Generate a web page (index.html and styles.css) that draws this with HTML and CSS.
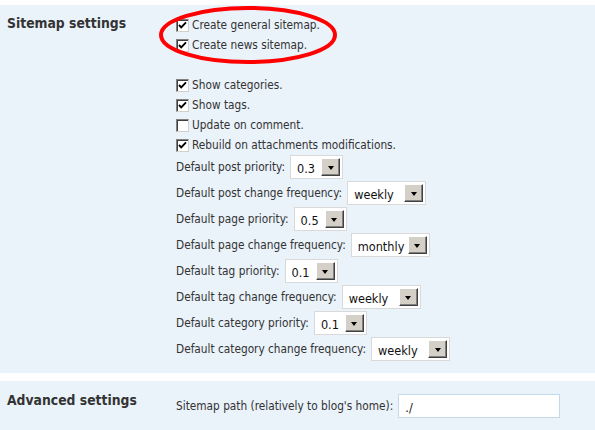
FILE: index.html
```html
<!DOCTYPE html>
<html>
<head>
<meta charset="utf-8">
<link rel="stylesheet" href="styles.css">
</head>
<body>
<div class="page">
  <section class="panel panel-main">
    <h3 class="heading">Sitemap settings</h3>
    <div class="content">
      <div class="checks">
        <label class="check"><span class="box on"><svg viewBox="0 0 11 11"><path d="M2 5 L4.2 7.3 L9 2.3" /></svg></span>Create general sitemap.</label>
        <label class="check"><span class="box on"><svg viewBox="0 0 11 11"><path d="M2 5 L4.2 7.3 L9 2.3" /></svg></span>Create news sitemap.</label>
        <div class="blank"></div>
        <label class="check"><span class="box on"><svg viewBox="0 0 11 11"><path d="M2 5 L4.2 7.3 L9 2.3" /></svg></span>Show categories.</label>
        <label class="check"><span class="box on"><svg viewBox="0 0 11 11"><path d="M2 5 L4.2 7.3 L9 2.3" /></svg></span>Show tags.</label>
        <label class="check"><span class="box"></span>Update on comment.</label>
        <label class="check"><span class="box on"><svg viewBox="0 0 11 11"><path d="M2 5 L4.2 7.3 L9 2.3" /></svg></span>Rebuild on attachments modifications.</label>
      </div>
      <div class="selects">
        <div class="srow"><span class="lbl">Default post priority:</span><span class="sel small"><span class="val">0.3</span><span class="btn"><i class="arrow"></i></span></span></div>
        <div class="srow"><span class="lbl">Default post change frequency:</span><span class="sel wide"><span class="val">weekly</span><span class="btn"><i class="arrow"></i></span></span></div>
        <div class="srow"><span class="lbl">Default page priority:</span><span class="sel small"><span class="val">0.5</span><span class="btn"><i class="arrow"></i></span></span></div>
        <div class="srow"><span class="lbl">Default page change frequency:</span><span class="sel wide"><span class="val">monthly</span><span class="btn"><i class="arrow"></i></span></span></div>
        <div class="srow"><span class="lbl">Default tag priority:</span><span class="sel small"><span class="val">0.1</span><span class="btn"><i class="arrow"></i></span></span></div>
        <div class="srow"><span class="lbl">Default tag change frequency:</span><span class="sel wide"><span class="val">weekly</span><span class="btn"><i class="arrow"></i></span></span></div>
        <div class="srow"><span class="lbl">Default category priority:</span><span class="sel small"><span class="val">0.1</span><span class="btn"><i class="arrow"></i></span></span></div>
        <div class="srow"><span class="lbl">Default category change frequency:</span><span class="sel wide"><span class="val">weekly</span><span class="btn"><i class="arrow"></i></span></span></div>
      </div>
    </div>
  </section>
  <section class="panel panel-adv">
    <h3 class="heading">Advanced settings</h3>
    <div class="content adv">
      <div class="srow"><span class="lbl">Sitemap path (relatively to blog's home):</span><span class="textbox">./</span></div>
    </div>
  </section>
  <svg class="circle" width="595" height="75" viewBox="0 0 595 75">
    <ellipse cx="248" cy="35" rx="87" ry="27" fill="none" stroke="#ff0000" stroke-width="4"/>
  </svg>
</div>
</body>
</html>
```
FILE: styles.css
```css
html, body {
  margin: 0;
  padding: 0;
  background: #ffffff;
}
body {
  font-family: "DejaVu Sans Condensed", "DejaVu Sans", sans-serif;
  font-size: 11.75px;
  color: #333333;
}
.page {
  position: relative;
  width: 595px;
  height: 430px;
  overflow: hidden;
  padding-top: 5px;
  box-sizing: border-box;
}
.panel {
  background: #eaf2fa;
  display: grid;
  grid-template-columns: 176px 1fr;
}
.panel-main {
  padding: 8px 0 11px 0;
}
.panel-adv {
  margin-top: 8px;
  padding: 9px 0 20px 0;
}
.heading {
  margin: 0;
  padding-left: 7px;
  font-size: 13.8px;
  font-weight: bold;
  line-height: 20px;
  color: #333333;
}
.content {
  padding-top: 2px;
}
.checks {
  display: flex;
  flex-direction: column;
}
.check {
  display: flex;
  align-items: center;
  height: 20px;
  white-space: nowrap;
}
.blank {
  height: 20px;
}
.box {
  width: 11px;
  height: 11px;
  background: #ffffff;
  border: 1px solid;
  border-color: #7f7f7f #d4d0c8 #d4d0c8 #7f7f7f;
  box-shadow: inset 1px 1px 0 #404040;
  margin-right: 3px;
  display: flex;
  flex: none;
}
.box svg {
  width: 11px;
  height: 11px;
}
.box svg path {
  fill: none;
  stroke: #000000;
  stroke-width: 1.9;
}
.selects {
  display: flex;
  flex-direction: column;
  margin-top: -1px;
}
.srow {
  display: flex;
  align-items: center;
  height: 26px;
  white-space: nowrap;
}
.lbl {
  margin-right: 5px;
}
.sel {
  box-sizing: border-box;
  height: 24px;
  background: #ffffff;
  border: 1px solid #d9d9d9;
  display: flex;
  align-items: center;
  justify-content: space-between;
  padding: 0 2px 0 6px;
  font-size: 12.6px;
  color: #111111;
}
.sel.small {
  width: 53px;
}
.sel.wide {
  width: 79px;
}
.val {
  padding-top: 3px;
}
.btn {
  box-sizing: border-box;
  width: 19px;
  height: 18px;
  background: #d4d0c8;
  border: 1px solid;
  border-color: #ffffff #404040 #404040 #ffffff;
  box-shadow: inset -1px -1px 0 #808080;
  display: flex;
  align-items: center;
  justify-content: center;
  flex: none;
}
.arrow {
  width: 0;
  height: 0;
  border-left: 3.5px solid transparent;
  border-right: 3.5px solid transparent;
  border-top: 4px solid #000000;
  margin-top: 1px;
}
.adv {
  padding-top: 3px;
}
.textbox {
  box-sizing: border-box;
  width: 162px;
  height: 24px;
  background: #ffffff;
  border: 1px solid #c3d9ec;
  display: flex;
  align-items: center;
  padding: 2px 6px 0;
  font-size: 12.6px;
  color: #111111;
}
.circle {
  position: absolute;
  left: 0;
  top: 0;
}
```
